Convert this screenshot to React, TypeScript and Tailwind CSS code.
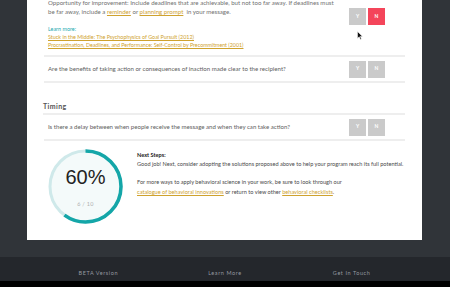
import React from 'react'

const font = { fontFamily: 'Lato, "Open Sans", sans-serif' }

function YesNo({ no }: { no?: boolean }) {
  return (
    <div className="flex gap-[2px] shrink-0">
      <div className="w-[17px] h-[17px] bg-[#cacaca] text-white text-[5px] font-bold flex items-center justify-center">
        Y
      </div>
      <div
        className={`w-[17px] h-[17px] text-white text-[5px] font-bold flex items-center justify-center ${
          no ? 'bg-[#f4455a]' : 'bg-[#cacaca]'
        }`}
      >
        N
      </div>
    </div>
  )
}

function Question({ text }: { text: string }) {
  return (
    <div className="flex items-center h-[26px] border-b-2 border-[#eeeeee]">
      <p className="flex-1 pl-[4px] text-[6.1px] text-[#5e5e5e]">{text}</p>
      <div className="mr-[20px]">
        <YesNo />
      </div>
    </div>
  )
}

function Progress() {
  const r = 35.5
  const c = 2 * Math.PI * r
  return (
    <div className="relative w-[75px] h-[75px] shrink-0">
      <svg width="75" height="75" viewBox="0 0 75 75" className="absolute inset-0">
        <circle cx="37.5" cy="37.5" r={r} fill="#f4fafa" stroke="#cfe9ea" strokeWidth="3" />
        <circle
          cx="37.5"
          cy="37.5"
          r={r}
          fill="none"
          stroke="#14a6a8"
          strokeWidth="3.5"
          strokeDasharray={`${c * 0.6} ${c}`}
          transform="rotate(-90 37.5 37.5)"
        />
      </svg>
      <div className="absolute inset-0 flex flex-col items-center justify-center">
        <span className="text-[20px] leading-none text-[#222] mt-[2px]" style={{ fontFamily: '"Liberation Sans", Arial, sans-serif' }}>
          60%
        </span>
        <span className="text-[5.5px] text-[#b0b0b0] mt-[13px] tracking-[0.3px]">6 / 10</span>
      </div>
    </div>
  )
}

export default function App() {
  return (
    <div className="relative w-[450px] h-[287px] bg-[#303439] flex flex-col overflow-hidden" style={font}>
      <div className="px-[27px] pr-[28px]">
        <div className="bg-white h-[240px] overflow-hidden pl-[17px] pr-[17px]">
          {/* tail of the previous question */}
          <div className="flex items-start border-b-2 border-[#eeeeee] h-[57px]">
            <div className="flex-1 pl-[4px] -mt-[2px]">
              <p className="text-[6.1px] leading-[9px] text-[#707070] whitespace-nowrap">
                Opportunity for improvement: Include deadlines that are achievable, but not too far away. If deadlines must
                <br />
                be far away, include a <a className="text-[#cfa22e] underline">reminder</a> or{' '}
                <a className="text-[#cfa22e] underline">planning prompt</a>&nbsp; in your message.
              </p>
              <p className="mt-[9px] text-[5.4px] leading-[8px] text-[#22aab0]">Learn more:</p>
              <p className="text-[5.4px] leading-[8px] text-[#cfa22e] underline">
                Stuck in the Middle: The Psychophysics of Goal Pursuit (2012)
              </p>
              <p className="text-[5.3px] leading-[8px] text-[#cfa22e] underline">
                Procrastination, Deadlines, and Performance: Self-Control by Precommitment (2001)
              </p>
            </div>
            <div className="mt-[8px] mr-[20px]">
              <YesNo no />
            </div>
          </div>
          <Question text="Are the benefits of taking action or consequences of inaction made clear to the recipient?" />

          <div className="h-[32px] flex items-end pb-[2px] border-b-2 border-[#eeeeee] -ml-[1px]">
            <h3 className="text-[7px] font-bold text-[#555] tracking-[0.4px]">Timing</h3>
          </div>
          <Question text="Is there a delay between when people receive the message and when they can take action?" />

          <div className="flex gap-[14px] pl-[4px] pt-[8px]">
            <Progress />
            <div className="text-[5.6px] leading-[9px] text-[#4a4a4a] pt-[1px]">
              <p className="font-bold text-[#222]">Next Steps:</p>
              <p>
                Good job! Next, consider adopting the solutions proposed above to help your program reach its full potential.
              </p>
              <p className="mt-[9px] leading-[10px]">
                For more ways to apply behavioral science in your work, be sure to look through our
                <br />
                <a className="text-[#cfa22e] underline">catalogue of behavioral innovations</a> or return to view other{' '}
                <a className="text-[#cfa22e] underline">behavioral checklists</a>.
              </p>
            </div>
          </div>
        </div>
      </div>

      <div className="h-[17px]" />
      <footer className="h-[24px] bg-[#24272c] grid grid-cols-3 px-[35px] pt-[14px]">
        {['BETA Version', 'Learn More', 'Get In Touch'].map((label) => (
          <span key={label} className="text-center text-[5.5px] leading-none tracking-[0.6px] text-[#9499a0]">
            {label}
          </span>
        ))}
      </footer>
      <div className="flex-1 bg-black" />

      <svg width="6" height="9" viewBox="0 0 6 9" className="absolute left-[357px] top-[31px]">
        <path d="M0.5 0.5 L0.5 7.5 L2.2 5.8 L3.4 8.4 L4.4 7.9 L3.3 5.4 L5.5 5.4 Z" fill="#111" stroke="#fff" strokeWidth="0.5" />
      </svg>
    </div>
  )
}
